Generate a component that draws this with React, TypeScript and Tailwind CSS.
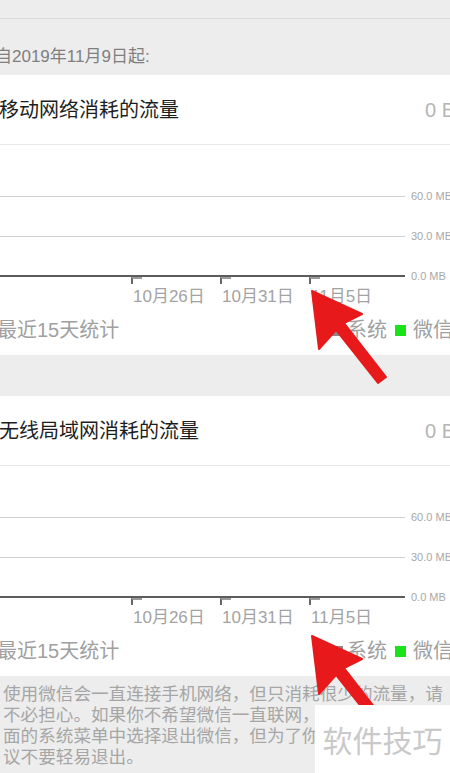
import React from 'react';

const GridRow = ({ label, base }: { label: string; base?: boolean }) => (
  <div className="flex items-center h-[12px]">
    <div className={base ? 'flex-1 h-[2px] bg-[#5c5c5c]' : 'flex-1 h-px bg-[#d0d0d0]'} />
    <span className="shrink-0 w-[39px] ml-[6px] whitespace-nowrap text-[11px] leading-[12px] text-[#a8a8a8]">
      {label}
    </span>
  </div>
);

const UsageCard = ({ title }: { title: string }) => (
  <div className="bg-white">
    <div className="h-[70px] flex items-center border-b border-[#e8e8e8]">
      <span className="flex-1 -ml-[1px] text-[20px] text-[#1d1d1d]">{title}</span>
      <span className="shrink-0 w-[25px] whitespace-nowrap text-[20px] text-[#b5b5b5]">0 B</span>
    </div>
    <div className="pt-[45px] pb-[13px]">
      <GridRow label="60.0 MB" />
      <div className="mt-[28px]">
        <GridRow label="30.0 MB" />
      </div>
      <div className="mt-[28px]">
        <GridRow label="0.0 MB" base />
      </div>
      <div className="-mt-[5px] h-[7px] flex pl-[131px]">
        {[0, 1, 2].map((i) => (
          <div key={i} className="w-[89px] shrink-0">
            <div className="w-[11px] h-[7px] border-l-2 border-t-2 border-l-[#666] border-t-[#9c9c9c]" />
          </div>
        ))}
      </div>
      <div className="mt-[4px] flex pl-[133px] text-[17px] leading-[18px] text-[#a3a3a3]">
        <span className="w-[89px] shrink-0">10月26日</span>
        <span className="w-[89px] shrink-0">10月31日</span>
        <span className="w-[89px] shrink-0">11月5日</span>
      </div>
      <div className="mt-[12px] h-[24px] flex items-center justify-between text-[20px] text-[#a0a0a0]">
        <span className="-ml-[3px]">最近15天统计</span>
        <div className="flex items-center shrink-0">
          <span className="w-[11px] h-[11px] bg-[#8a8a8a]" />
          <span className="ml-[4px]">系统</span>
          <span className="ml-[8px] w-[11px] h-[11px] bg-[#1ae31a]" />
          <span className="ml-[7px] w-[37px] shrink-0 whitespace-nowrap">微信</span>
        </div>
      </div>
    </div>
  </div>
);

const Arrow = ({ dy }: { dy: number }) => (
  <polygon
    transform={`translate(0 ${dy})`}
    points="312,291 362,314 344,323 386,377 378,383 336,330 319,349"
    fill="#e8191b"
    stroke="#e8191b"
    strokeWidth="2"
    strokeLinejoin="round"
  />
);

export default function App() {
  return (
    <div className="relative w-[450px] h-[773px] overflow-hidden bg-[#ededed] font-['Liberation_Sans','Noto_Sans_CJK_SC',sans-serif]">
      <div className="h-[19px] border-b border-[#dadada]" />
      <div className="h-[56px] flex items-end pb-[8px]">
        <span className="-ml-[5px] text-[17px] leading-[20px] text-[#7f7f7f]">自2019年11月9日起:</span>
      </div>

      <UsageCard title="移动网络消耗的流量" />
      <div className="h-[41px]" />
      <UsageCard title="无线局域网消耗的流量" />

      <div className="pt-[8px] pl-[3px] text-[17.6px] leading-[21px] text-[#a6a6a6] whitespace-nowrap">
        <div>使用微信会一直连接手机网络，但只消耗很少的流量，请</div>
        <div>不必担心。如果你不希望微信一直联网，可以在主界</div>
        <div>面的系统菜单中选择退出微信，但为了你能及时收到消息，建</div>
        <div>议不要轻易退出。</div>
      </div>

      <svg className="absolute inset-0 pointer-events-none" width="450" height="773" viewBox="0 0 450 773">
        <Arrow dy={0} />
        <Arrow dy={345} />
      </svg>

      <div className="absolute right-0 bottom-0 w-[135px] h-[68px] bg-white flex items-center justify-center text-[30px] text-[#c9c9c9] font-['Noto_Sans_CJK_SC',sans-serif]">
        软件技巧
      </div>
    </div>
  );
}
